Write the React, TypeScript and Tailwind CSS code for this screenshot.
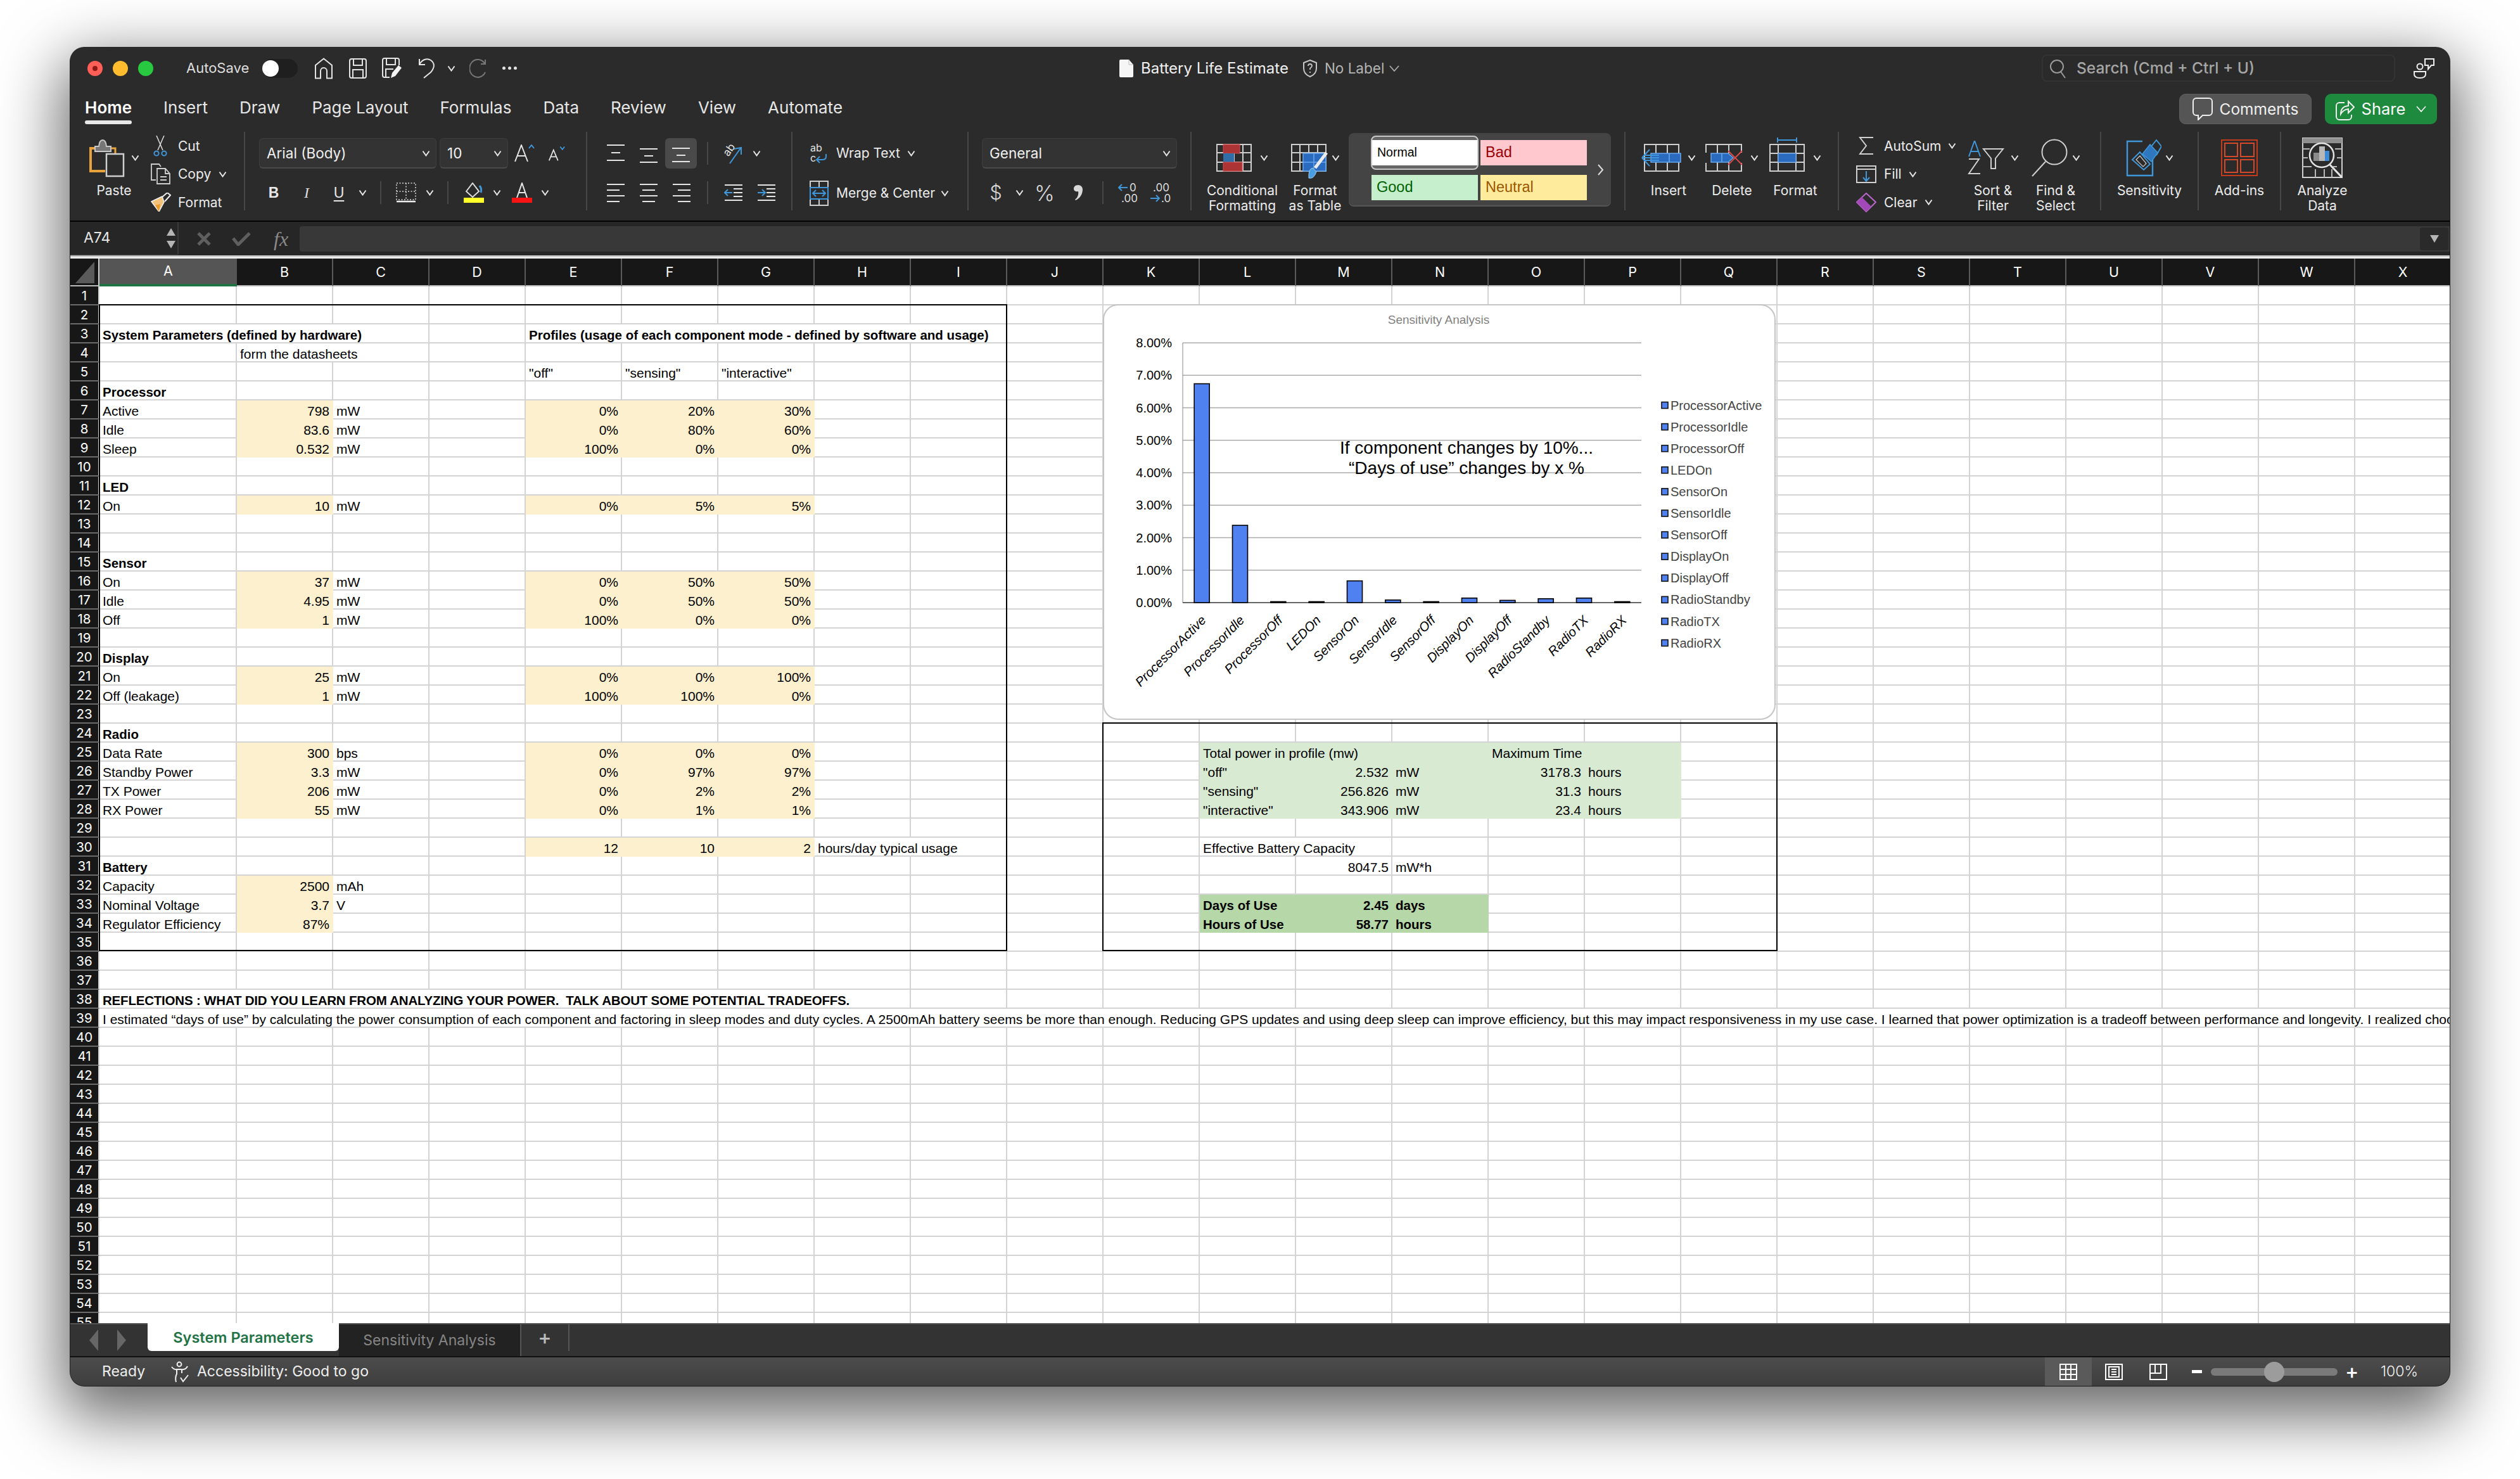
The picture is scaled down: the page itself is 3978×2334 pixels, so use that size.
import React from "react";

type CellDef = { c: number; span?: number; t: string; b?: boolean; r?: boolean; tight?: boolean };

const LET = "ABCDEFGHIJKLMNOPQRSTUVWX".split("");
const L = (t: string, b = false): CellDef => ({ c: 1, t, b });
const V = (c: number, t: string): CellDef => ({ c, t, r: true });
const T = (c: number, t: string, span = 1, b = false): CellDef => ({ c, t, span, b });

const param = (label: string, v: string, u: string, a: string, b: string, c: string): CellDef[] => [
  L(label), V(2, v), T(3, u), V(5, a), V(6, b), V(7, c),
];

const ROWS: Record<number, CellDef[]> = {
  3: [{ c: 1, t: "System Parameters (defined by hardware)", span: 3, b: true }, { c: 5, t: "Profiles (usage of each component mode - defined by software and usage)", span: 5, b: true }],
  4: [T(2, "form the datasheets", 2)],
  5: [T(5, '"off"'), T(6, '"sensing"'), T(7, '"interactive"')],
  6: [L("Processor", true)],
  7: param("Active", "798", "mW", "0%", "20%", "30%"),
  8: param("Idle", "83.6", "mW", "0%", "80%", "60%"),
  9: param("Sleep", "0.532", "mW", "100%", "0%", "0%"),
  11: [L("LED", true)],
  12: param("On", "10", "mW", "0%", "5%", "5%"),
  15: [L("Sensor", true)],
  16: param("On", "37", "mW", "0%", "50%", "50%"),
  17: param("Idle", "4.95", "mW", "0%", "50%", "50%"),
  18: param("Off", "1", "mW", "100%", "0%", "0%"),
  20: [L("Display", true)],
  21: param("On", "25", "mW", "0%", "0%", "100%"),
  22: param("Off (leakage)", "1", "mW", "100%", "100%", "0%"),
  24: [L("Radio", true)],
  25: [...param("Data Rate", "300", "bps", "0%", "0%", "0%"), T(12, "Total power in profile (mw)", 2), T(15, "Maximum Time", 2)],
  26: [...param("Standby Power", "3.3", "mW", "0%", "97%", "97%"), T(12, '"off"'), V(13, "2.532"), T(14, "mW"), V(15, "3178.3"), T(16, "hours")],
  27: [...param("TX Power", "206", "mW", "0%", "2%", "2%"), T(12, '"sensing"'), V(13, "256.826"), T(14, "mW"), V(15, "31.3"), T(16, "hours")],
  28: [...param("RX Power", "55", "mW", "0%", "1%", "1%"), T(12, '"interactive"'), V(13, "343.906"), T(14, "mW"), V(15, "23.4"), T(16, "hours")],
  30: [V(5, "12"), V(6, "10"), V(7, "2"), T(8, "hours/day typical usage", 2), T(12, "Effective Battery Capacity", 2)],
  31: [L("Battery", true), V(13, "8047.5"), T(14, "mW*h")],
  32: [L("Capacity"), V(2, "2500"), T(3, "mAh")],
  33: [L("Nominal Voltage"), V(2, "3.7"), T(3, "V"), T(12, "Days of Use", 1, true), { c: 13, t: "2.45", r: true, b: true }, T(14, "days", 1, true)],
  34: [L("Regulator Efficiency"), V(2, "87%"), T(12, "Hours of Use", 1, true), { c: 13, t: "58.77", r: true, b: true }, T(14, "hours", 1, true)],
  38: [{ c: 1, t: "REFLECTIONS : WHAT DID YOU LEARN FROM ANALYZING YOUR POWER.  TALK ABOUT SOME POTENTIAL TRADEOFFS.", span: 8, b: true, tight: true }],
  39: [{ c: 1, t: "I estimated \u201Cdays of use\u201D by calculating the power consumption of each component and factoring in sleep modes and duty cycles. A 2500mAh battery seems be more than enough. Reducing GPS updates and using deep sleep can improve efficiency, but this may impact responsiveness in my use case. I learned that power optimization is a tradeoff between performance and longevity. I realized choosing", span: 24 }],
};

const YELLOW_ROWS = [7, 8, 9, 12, 16, 17, 18, 21, 22, 25, 26, 27, 28];
function fillOf(r: number, c: number): string {
  if (c === 2 && (YELLOW_ROWS.includes(r) || [32, 33, 34].includes(r))) return "yellow";
  if (c >= 5 && c <= 7 && (YELLOW_ROWS.includes(r) || r === 30)) return "yellow";
  if (c >= 12 && c <= 16 && r >= 25 && r <= 28) return "green";
  if (c >= 12 && c <= 14 && r >= 33 && r <= 34) return "dark";
  return "none";
}
const FILL: Record<string, string> = {
  yellow: "bg-[#fdf0cf] border-[#fdf0cf]",
  green: "bg-[#d9ead3] border-[#d9ead3]",
  dark: "bg-[#b6d7a8] border-[#b6d7a8]",
  none: "bg-white border-[#d4d4d4]",
};
const SPAN: Record<number, string> = { 1: "col-span-1", 2: "col-span-2", 3: "col-span-3", 5: "col-span-5", 8: "col-span-8", 24: "col-span-[24]" };

function SheetRow({ r }: { r: number }) {
  const defs = ROWS[r] || [];
  const out: React.ReactNode[] = [];
  for (let c = 1; c <= 24; c++) {
    const d = defs.find((x) => x.c === c);
    const span = d?.span ?? 1;
    out.push(
      <div
        key={c}
        className={`${SPAN[span]} ${FILL[fillOf(r, c)]} ${d?.r ? "justify-end" : "justify-start"} ${d?.b ? "font-bold text-[20.5px]" : "font-normal"} ${d?.tight ? "tracking-[-0.2px]" : ""} box-border h-[30px] border-r-2 border-b-2 flex items-end pl-[5px] pr-[4px] pb-[1px] leading-[21px] whitespace-pre text-black`}
      >
        {d?.t}
      </div>
    );
    c += span - 1;
  }
  return <>{out}</>;
}

const Chev = ({ className = "" }: { className?: string }) => (
  <svg width="13" height="10" viewBox="0 0 13 10" fill="none" className={`shrink-0 ${className}`}>
    <path d="M1.5 1.5 L6.5 8.5 L11.5 1.5" stroke="#e6e6e6" strokeWidth="2" />
  </svg>
);

const W = "#e4e4e4";
const G = "#cfcfcf";
const B = "#3f97d9";

const IconHome = () => (
  <svg width="30" height="34" viewBox="0 0 30 34" fill="none"><path d="M2 32.5 V12 L15 1.5 L28 12 V32.5 H20 V21 a5 5 0 0 0 -10 0 V32.5 Z" stroke={W} strokeWidth="2" /></svg>
);
const IconSave = () => (
  <svg width="28" height="32" viewBox="0 0 28 32" fill="none"><rect x="1" y="1" width="26" height="30" rx="3" stroke={W} strokeWidth="2" /><path d="M7 1 V11 H21 V1 M6 31 V18 H22 V31" stroke={W} strokeWidth="2" /></svg>
);
const IconSaveEdit = () => (
  <svg width="32" height="34" viewBox="0 0 32 34" fill="none"><path d="M12 31 H4 a3 3 0 0 1 -3 -3 V4 a3 3 0 0 1 3 -3 H24 a3 3 0 0 1 3 3 V12" stroke={W} strokeWidth="2" /><path d="M7 1 V11 H21 V1 M6 31 V18 H18" stroke={W} strokeWidth="2" /><path d="M14 32 L16 24 L26 12 L31 16 L21 29 Z" fill="#f2f2f2" /></svg>
);
const IconUndo = () => (
  <svg width="27" height="32" viewBox="0 0 27 32" fill="none"><path d="M2 1 V10 H11 M2 10 C6 2 14 -1 20 3 C27 8 26 15 20 22 L9 31" stroke={W} strokeWidth="2" /></svg>
);
const IconRedo = () => (
  <svg width="28" height="30" viewBox="0 0 28 30" fill="none"><path d="M24 7 A13 14 0 1 0 25 21" stroke="#777" strokeWidth="2" /><path d="M25 1 V8 H18" stroke="#777" strokeWidth="2" /></svg>
);
const IconPaste = () => (
  <svg width="56" height="62" viewBox="0 0 56 62" fill="none">
    <path d="M12 16 H2 V52 H25" stroke="#e8a23b" strokeWidth="4" />
    <path d="M33 16 H41 V27" stroke="#e8a23b" strokeWidth="3" />
    <path d="M9 21 V13 H15 Q16 3 21 3 Q26 3 27 13 H34 V21 Z" fill="#777" stroke="#c8c8c8" strokeWidth="2" />
    <rect x="27" y="25" width="27" height="35" fill="#2b2b2b" stroke="#cfcfcf" strokeWidth="2.5" />
  </svg>
);
const IconCut = () => (
  <svg width="22" height="33" viewBox="0 0 22 33" fill="none">
    <path d="M5 0 L15 23 M17 0 L7 23" stroke="#d6d6d6" strokeWidth="1.6" />
    <circle cx="5" cy="28" r="3.6" stroke={B} strokeWidth="2" /><circle cx="17" cy="28" r="3.6" stroke={B} strokeWidth="2" />
  </svg>
);
const IconCopy = () => (
  <svg width="33" height="33" viewBox="0 0 33 33" fill="none">
    <path d="M9 26 H2 V1 H14 L17 5" stroke={G} strokeWidth="1.8" />
    <path d="M11 8 H24 L31 16 V32 H11 Z M24 8 V16 H31 M16 21 H26 M16 26 H26" stroke={G} strokeWidth="1.8" />
  </svg>
);
const IconBrush = () => (
  <svg width="33" height="30" viewBox="0 0 33 30" fill="none">
    <path d="M2 14 L19 6 L22 15 L14 30 Z" fill="#f3c27a" stroke="#eee" strokeWidth="1.6" />
    <path d="M8 20 L16 18 L14 30 Z" fill="#e99a2c" />
    <path d="M19 7 L27 0 L32 4 L23 14" stroke="#eee" strokeWidth="2" />
  </svg>
);
const IconGrow = ({ up }: { up: boolean }) => (
  <svg width={up ? 32 : 28} height="28" viewBox="0 0 32 28" fill="none">
    <path d={up ? "M1 27 L11 1 L21 27 M5 18 H17" : "M2 27 L10 8 L18 27 M5 20 H15"} stroke={W} strokeWidth="2" />
    <path d={up ? "M23 6 L27 1 L31 6" : "M22 2 L26 7 L30 2"} stroke={B} strokeWidth="2" />
  </svg>
);
const IconAlign = ({ rows }: { rows: [number, number, number][] }) => (
  <svg width="30" height="30" viewBox="0 0 30 30" fill="none">
    {rows.map((r, i) => (
      <rect key={i} x={r[0]} y={r[1]} width={r[2]} height="2" fill={W} />
    ))}
  </svg>
);
const IconOrient = () => (
  <svg width="32" height="34" viewBox="0 0 32 34" fill="none" className="overflow-visible">
    <text x="2" y="18" fontSize="17" fill={W} transform="rotate(-55 10 14)" fontFamily="Inter">ab</text>
    <path d="M11 33 L28 9 M18 10 L29 8 L29 19" stroke={B} strokeWidth="2" />
  </svg>
);
const IconIndent = ({ out }: { out: boolean }) => (
  <svg width="30" height="28" viewBox="0 0 30 28" fill="none">
    <path d="M1 2 H29 M15 14 H29 M1 26 H29 M15 8 H29 M15 20 H29" stroke={W} strokeWidth="2" />
    <path d={out ? "M13 14 H2 M6 9 L1 14 L6 19" : "M1 14 H12 M8 9 L13 14 L8 19"} stroke={B} strokeWidth="2" />
  </svg>
);
const IconWrap = () => (
  <svg width="30" height="34" viewBox="0 0 30 34" fill="none" className="overflow-visible">
    <text x="1" y="14" fontSize="16" fill={W} fontFamily="Inter">ab</text>
    <text x="1" y="30" fontSize="16" fill={W} fontFamily="Inter">c</text>
    <path d="M26 18 V22 Q26 27 20 27 H11 M16 22 L11 27 L16 32" stroke={B} strokeWidth="2" />
  </svg>
);
const IconMerge = () => (
  <svg width="30" height="40" viewBox="0 0 30 40" fill="none">
    <path d="M1 1 H29 V39 H1 Z M1 11 H29 M1 29 H29 M15 1 V11 M15 29 V39" stroke={G} strokeWidth="2" />
    <path d="M1 11 H29 V29 H1 Z" stroke={B} strokeWidth="2" />
    <path d="M6 20 H24 M10 15 L5 20 L10 25 M20 15 L25 20 L20 25" stroke={B} strokeWidth="2" />
  </svg>
);
const GridBase = ({ children, w = 56, h = 44, cols = [14, 28, 42], rows = [14, 29] }: { children?: React.ReactNode; w?: number; h?: number; cols?: number[]; rows?: number[] }) => (
  <svg width={w} height={h} viewBox={`0 0 ${w} ${h}`} fill="none" className="overflow-visible">
    <rect x="1" y="1" width={w - 2} height={h - 2} stroke={G} strokeWidth="2" />
    {cols.map((c) => <path key={c} d={`M${c} 1 V${h - 1}`} stroke={G} strokeWidth="2" />)}
    {rows.map((c) => <path key={c} d={`M1 ${c} H${w - 1}`} stroke={G} strokeWidth="2" />)}
    {children}
  </svg>
);
const IconCond = () => (
  <GridBase>
    <rect x="11" y="1" width="26" height="14" fill="#ac3434" stroke="#d24d4d" strokeWidth="1" />
    <rect x="11" y="15" width="17" height="14" fill="#2f6ea6" />
    <rect x="11" y="29" width="30" height="14" fill="#ac3434" stroke="#d24d4d" strokeWidth="1" />
  </GridBase>
);
const IconTable = () => (
  <GridBase>
    <rect x="19" y="15" width="36" height="28" fill="#2a6bc0" stroke="#6aa8ea" strokeWidth="1.5" />
    <path d="M36 15 V43 M19 29 H55" stroke="#6aa8ea" strokeWidth="1.5" />
    <path d="M56 14 L38 38" stroke="#ececec" strokeWidth="5" />
    <path d="M28 54 Q36 56 40 44 L34 38 Q27 40 28 54 Z" fill="#4a9de0" stroke="#9bcbf0" strokeWidth="1" />
  </GridBase>
);
const IconInsert = () => (
  <svg width="64" height="44" viewBox="0 0 64 44" fill="none" className="overflow-visible">
    <path d="M5 1 H59 V43 H5 Z M23 1 V43 M41 1 V43" stroke={G} strokeWidth="2" />
    <rect x="15" y="15" width="47" height="14" fill="#2a6bc0" stroke="#6aa8ea" strokeWidth="1.5" /><path d="M44 15 V29" stroke="#6aa8ea" strokeWidth="1.5" />
    <path d="M1 22 H28 M1 22 L13 9 M1 22 L13 35 M4 18 H28 M4 26 H28" stroke={B} strokeWidth="2" />
  </svg>
);
const IconDelete = () => (
  <svg width="62" height="44" viewBox="0 0 62 44" fill="none" className="overflow-visible">
    <path d="M1 14 V1 H57 V14 M1 30 V43 H57 V30 M19 1 V15 M37 1 V15 M19 29 V43 M37 29 V43" stroke={G} strokeWidth="2" />
    <path d="M9 15 H36 L44 22 L36 29 H9 Z" fill="#2a6bc0" stroke="#6aa8ea" strokeWidth="1.5" /><path d="M26 15 V29" stroke="#6aa8ea" strokeWidth="1.5" />
    <path d="M36 11 L58 33 M58 11 L36 33" stroke="#d94a4a" strokeWidth="2" />
  </svg>
);
const IconFormat = () => (
  <div className="flex flex-col items-center gap-[2px] -mt-[10px]">
    <svg width="32" height="8" viewBox="0 0 32 8" fill="none"><path d="M1 0 V8 M31 0 V8 M1 4 H31" stroke={B} strokeWidth="2" /></svg>
    <GridBase cols={[14, 42]} rows={[15, 29]}>
      <rect x="14" y="15" width="28" height="14" fill="#2a6bc0" stroke="#6aa8ea" strokeWidth="1" />
    </GridBase>
  </div>
);
const IconSigma = () => (
  <svg width="24" height="28" viewBox="0 0 24 28" fill="none"><path d="M23 1 H2 L12 14 L2 27 H23" stroke={G} strokeWidth="2" /></svg>
);
const IconFill = () => (
  <svg width="32" height="28" viewBox="0 0 32 28" fill="none"><rect x="1" y="1" width="30" height="26" stroke={G} strokeWidth="2" /><path d="M1 6 H31" stroke={G} strokeWidth="2" /><path d="M16 9 V24 M11 19 L16 25 L21 19" stroke={B} strokeWidth="2" /></svg>
);
const IconClear = () => (
  <svg width="32" height="31" viewBox="0 0 32 31" fill="none"><path d="M16 1 L31 15 L16 30 L1 15 Z" stroke="#b868c8" strokeWidth="2" /><path d="M1 15 L9 7 L24 22 L16 30 Z" fill="#a248b8" /></svg>
);
const IconSort = () => (
  <svg width="62" height="54" viewBox="0 0 62 54" fill="none">
    <path d="M2 25 L11 0 L20 25 M5 17 H17" stroke={B} strokeWidth="2" />
    <path d="M2 29 H18 L2 52 H20" stroke={G} strokeWidth="2" />
    <path d="M25 13 H56 L44 28 V44 H37 V28 Z" stroke={G} strokeWidth="2" />
  </svg>
);
const IconFind = () => (
  <svg width="58" height="60" viewBox="0 0 58 60" fill="none"><circle cx="37" cy="21" r="19.5" stroke={G} strokeWidth="2" /><path d="M23 36 L2 59" stroke={G} strokeWidth="2" /></svg>
);
const IconSensitivity = () => (
  <svg width="56" height="60" viewBox="0 0 56 60" fill="none">
    <path d="M26 4 H2 V58 H42 V32" stroke={B} strokeWidth="2.4" />
    <path d="M36 17 L48 2 L56 12 L48 26" stroke={B} strokeWidth="2" />
    <path d="M26 24 L38 9 L50 22 L40 36 Z" fill="#2f78c0" stroke={B} strokeWidth="1.5" />
    <path d="M10 33 L22 21 L38 40 L28 49 Z" stroke={B} strokeWidth="2" />
    <path d="M16 33 L22 27 L32 39 L27 44 Z" stroke={G} strokeWidth="1.2" />
  </svg>
);
const IconAddins = () => (
  <svg width="58" height="58" viewBox="0 0 58 58" fill="none">
    <rect x="1" y="1" width="56" height="56" stroke="#c23b1d" strokeWidth="2" />
    <rect x="6" y="6" width="20" height="21" stroke="#d5482a" strokeWidth="2" /><rect x="31" y="6" width="21" height="21" stroke="#d5482a" strokeWidth="2" />
    <rect x="6" y="32" width="20" height="20" stroke="#d5482a" strokeWidth="2" /><rect x="31" y="32" width="21" height="20" stroke="#d5482a" strokeWidth="2" />
  </svg>
);
const IconAnalyze = () => (
  <svg width="64" height="64" viewBox="0 0 64 64" fill="none">
    <rect x="1" y="1" width="62" height="62" stroke={G} strokeWidth="2" />
    <rect x="1" y="1" width="62" height="8" fill="#8f8f8f" />
    <path d="M1 18 H12 M52 18 H63 M1 32 H9 M55 32 H63 M1 46 H15 M49 46 H55 M21 50 V63 M35 50 V63 M47 50 V63" stroke="#b8b8b8" strokeWidth="2" />
    <circle cx="31" cy="28" r="19" stroke="#e4e4e4" strokeWidth="2.5" fill="#2b2b2b" />
    <rect x="18" y="24" width="9" height="13" fill="#8a8a8a" /><rect x="27" y="14" width="9" height="23" fill="#b8b8b8" /><rect x="36" y="21" width="7" height="16" fill="#3a8ad8" />
    <path d="M44 43 L63 63" stroke="#e4e4e4" strokeWidth="3" />
  </svg>
);
const Sep = () => <div className="w-[2px] h-[36px] bg-[#474747]" />;
const Select = ({ w, label, className = "" }: { w: string; label: string; className?: string }) => (
  <div className={`${w} ${className} h-[48px] box-border bg-[#333333] border border-[#3e3e3e] border-b-2 border-b-[#4a4a4a] rounded-[6px] flex items-center justify-between pl-[11px] pr-[9px] text-[22.5px] text-[#f0f0f0]`}>
    <span>{label}</span>
    <Chev />
  </div>
);
const Big = ({ w, icon, chev = false, label, chevGap = "gap-[13px]" }: { w: string; icon: React.ReactNode; chev?: boolean; label: string; chevGap?: string }) => (
  <div className={`${w} shrink-0 flex flex-col items-center`}>
    <div className={`h-[81px] shrink-0 flex items-center ${chevGap}`}>
      {icon}
      {chev && <Chev />}
    </div>
    <div className="text-center leading-[24px] text-[21px] text-[#ececec] whitespace-pre">{label}</div>
  </div>
);
const Mini = ({ icon, label, chev = true, labelGap = "ml-[10px]", gapChev = "ml-[11px]" }: { icon: React.ReactNode; label: string; chev?: boolean; labelGap?: string; gapChev?: string }) => (
  <div className="h-[44.5px] shrink-0 flex items-center">
    <div className="w-[36px] flex justify-center">{icon}</div>
    <span className={`${labelGap} text-[21px] text-[#ececec]`}>{label}</span>
    {chev && <Chev className={gapChev} />}
  </div>
);
const Group = ({ w, children, className = "" }: { w: string; children: React.ReactNode; className?: string }) => (
  <div className={`${w} ${className} h-[124px] shrink-0 box-border border-r-2 border-[#474747] flex`}>{children}</div>
);
const Style = ({ t, cls, text }: { t: string; cls: string; text: string }) => (
  <div className={`${cls} ${text} h-[40px] w-[168px] flex items-center px-[8px] font-['Liberation_Sans',sans-serif]`}>{t}</div>
);

const BARS = [6.74, 2.38, 0.03, 0.03, 0.67, 0.08, 0.03, 0.14, 0.07, 0.12, 0.14, 0.03];
const NAMES = ["ProcessorActive", "ProcessorIdle", "ProcessorOff", "LEDOn", "SensorOn", "SensorIdle", "SensorOff", "DisplayOn", "DisplayOff", "RadioStandby", "RadioTX", "RadioRX"];

function Chart() {
  const x0 = 126, x1 = 850, y0 = 471, unit = 51.25;
  const step = (x1 - x0) / 12;
  return (
    <div className="absolute left-[1630px] top-[28px] w-[1062px] h-[656px] bg-white border-2 border-[#c4c4c4] rounded-[24px] box-border overflow-hidden">
      <svg width="1062" height="656" viewBox="0 0 1062 656" className="font-['Liberation_Sans',sans-serif] block -ml-[2px] -mt-[2px]">
        <text x="530" y="31" textAnchor="middle" fontSize="19" fill="#808080">Sensitivity Analysis</text>
        {Array.from({ length: 9 }, (_, i) => (
          <g key={i}>
            {i > 0 && <line x1={x0} x2={x1} y1={y0 - i * unit} y2={y0 - i * unit} stroke="#ababab" strokeWidth="1.5" />}
            <text x="109" y={y0 - i * unit + 7} textAnchor="end" fontSize="20" fill="#000">{i}.00%</text>
          </g>
        ))}
        <line x1={x0} x2={x0} y1={y0 - 8 * unit} y2={y0} stroke="#888" strokeWidth="1" />
        <line x1={x0} x2={x1} y1={y0} y2={y0} stroke="#333" strokeWidth="1.5" />
        {BARS.map((v, i) => {
          const cx = x0 + step * (i + 0.5);
          const h = v * unit;
          return <rect key={i} x={cx - 12} y={y0 - h} width="24" height={h} fill="#4f81f0" stroke="#000" strokeWidth="1.6" />;
        })}
        {NAMES.map((n, i) => {
          const cx = x0 + step * (i + 0.5);
          return (
            <text key={n} x={cx + 8} y={y0 + 29} textAnchor="end" fontSize="20.5" fontStyle="italic" fill="#000" transform={`rotate(-45 ${cx + 8} ${y0 + 29})`}>{n}</text>
          );
        })}
        <text x="574" y="236" textAnchor="middle" fontSize="28" fill="#000">If component changes by 10%...</text>
        <text x="574" y="268" textAnchor="middle" fontSize="28" fill="#000">{"\u201CDays of use\u201D changes by x %"}</text>
        {NAMES.map((n, i) => {
          const y = 159.5 + i * 34.1;
          return (
            <g key={n}>
              <rect x="882" y={y - 5} width="10" height="10" fill="#4f81f0" stroke="#111" strokeWidth="1.6" />
              <text x="896" y={y + 7} fontSize="20" fill="#444">{n}</text>
            </g>
          );
        })}
      </svg>
    </div>
  );
}

export default function App() {
  const rows = Array.from({ length: 55 }, (_, i) => i + 1);
  return (
    <div className="w-[3978px] h-[2334px] bg-white overflow-hidden pt-[75px] pl-[111px] box-border font-[Inter,sans-serif]">
      <div className="w-[3756px] h-[2112px] rounded-[22px] overflow-hidden flex flex-col bg-[#2b2b2b] shadow-[0_34px_100px_14px_rgba(0,0,0,0.6),0_0_0_1px_rgba(0,0,0,0.8)] relative">
        {/* Title bar */}
        <div className="h-[65px] shrink-0 flex items-center">
          <div className="w-[1655px] shrink-0 flex items-center pl-[27px]">
            <div className="w-[24px] h-[24px] rounded-full bg-[#ff5f57] flex items-center justify-center"><div className="w-[8px] h-[8px] rounded-full bg-[#8a1a14]" /></div>
            <div className="w-[24px] h-[24px] rounded-full bg-[#febc2e] ml-[16px]" />
            <div className="w-[24px] h-[24px] rounded-full bg-[#28c840] ml-[16px]" />
            <span className="ml-[52px] w-[101px] text-[22px] text-[#dedede] whitespace-nowrap">AutoSave</span>
            <div className="ml-[19px] w-[56px] h-[30px] rounded-full bg-[#1f1f1f] flex items-center">
              <div className="w-[26px] h-[26px] rounded-full bg-white" />
            </div>
            <div className="ml-[26px] flex items-center"><IconHome /></div>
            <div className="ml-[25px] flex items-center"><IconSave /></div>
            <div className="ml-[24px] flex items-center"><IconSaveEdit /></div>
            <div className="ml-[25px] flex items-center"><IconUndo /></div>
            <Chev className="ml-[19px]" />
            <div className="ml-[22px] flex items-center"><IconRedo /></div>
            <div className="ml-[24px] flex gap-[4px]">
              <div className="w-[5px] h-[5px] rounded-full bg-[#e4e4e4]" /><div className="w-[5px] h-[5px] rounded-full bg-[#e4e4e4]" /><div className="w-[5px] h-[5px] rounded-full bg-[#e4e4e4]" />
            </div>
          </div>
          <svg width="24" height="30" viewBox="0 0 24 30"><path d="M1 3 a2 2 0 0 1 2 -2 H16 L23 9 V27 a2 2 0 0 1 -2 2 H3 a2 2 0 0 1 -2 -2 Z" fill="#f5f5f5" /><path d="M16 1 V9 H23" stroke="#bbb" fill="none" /></svg>
          <span className="ml-[11px] text-[24px] text-[#f0f0f0]">Battery Life Estimate</span>
          <svg width="22" height="28" viewBox="0 0 22 28" fill="none" className="ml-[23px]"><path d="M11 1 L21 5 V14 Q21 23 11 27 Q1 23 1 14 V5 Z" stroke="#c6c6c6" strokeWidth="2" /><path d="M8 10 Q8 7 11 7 Q14 7 14 10 Q14 12 11 14 V16 M11 19 V21" stroke="#c6c6c6" strokeWidth="1.8" /></svg>
          <span className="ml-[12px] text-[22.5px] text-[#b5b5b5]">No Label</span>
          <svg width="16" height="10" viewBox="0 0 16 10" fill="none" className="ml-[8px]"><path d="M1 1 L8 9 L15 1" stroke="#aaa" strokeWidth="1.8" /></svg>
          <div className="ml-auto w-[558px] h-[43px] box-border rounded-[8px] border-2 border-[#333333] bg-[#2a2a2a] flex items-center pl-[10px]">
            <svg width="26" height="32" viewBox="0 0 26 32" fill="none"><circle cx="12" cy="13" r="10" stroke="#9a9a9a" strokeWidth="2" /><path d="M18 21 L25 31" stroke="#9a9a9a" strokeWidth="2" /></svg>
            <span className="ml-[17px] text-[24.5px] font-medium text-[#a6a6a6]">Search (Cmd + Ctrl + U)</span>
          </div>
          <svg width="34" height="32" viewBox="0 0 34 32" fill="none" className="ml-[29px] mr-[23px]"><circle cx="10" cy="13" r="4.5" stroke="#eee" strokeWidth="2" /><path d="M1 21 H19 V25 Q19 31 10 31 Q1 31 1 25 Z" stroke="#eee" strokeWidth="2" /><path d="M18 1 H32 V11 H28 L23 17 V11 H18 Z" stroke="#eee" strokeWidth="2" /></svg>
        </div>
        {/* Tabs */}
        <div className="h-[68px] shrink-0 flex items-start pl-[23px] pr-[20px] text-[26px] text-[#e6e6e6]">
          <div className="flex gap-[50px] pt-[15px]">
            <div className="flex flex-col items-stretch">
              <span className="font-semibold text-white leading-[30px]">Home</span>
              <div className="h-[6px] rounded-full bg-[#e8e8e8] mt-[5px]" />
            </div>
            {["Insert", "Draw", "Page Layout", "Formulas", "Data", "Review", "View", "Automate"].map((t) => (
              <span key={t} className="leading-[30px]">{t}</span>
            ))}
          </div>
          <div className="ml-auto flex pt-[8px] gap-[21px] h-[56px]">
            <div className="w-[209px] h-[48px] rounded-[10px] bg-[#555555] border border-[#5e5e5e] box-border flex items-center justify-center gap-[11px] text-[#f0f0f0] text-[24.5px]">
              <svg width="32" height="36" viewBox="0 0 32 36" fill="none"><path d="M6 1 H26 a5 5 0 0 1 5 5 V23 a5 5 0 0 1 -5 5 H16 L9 35 V28 H6 a5 5 0 0 1 -5 -5 V6 a5 5 0 0 1 5 -5 Z" stroke="#eee" strokeWidth="2" /></svg>
              Comments
            </div>
            <div className="w-[177px] h-[48px] rounded-[10px] bg-[#1e8a3e] flex items-center justify-center text-white text-[25.5px] gap-[11px]">
              <svg width="30" height="36" viewBox="0 0 30 36" fill="none"><path d="M14 8 H6 a5 5 0 0 0 -5 5 V30 a5 5 0 0 0 5 5 H20 a5 5 0 0 0 5 -5 V27" stroke="#eee" strokeWidth="2" /><path d="M8 26 Q8 14 20 13 V6 L29 15 L20 24 V18 Q12 19 8 26 Z" stroke="#eee" strokeWidth="2" /></svg>
              Share
              <svg width="16" height="10" viewBox="0 0 16 10" fill="none" className="ml-[6px]"><path d="M1 1 L8 9 L15 1" stroke="#fff" strokeWidth="1.6" /></svg>
            </div>
          </div>
        </div>
        {/* Ribbon */}
        <div className="h-[140px] shrink-0 flex items-start">
          <Group w="w-[276px]" className="pl-[14px]">
            <Big w="w-[110px]" icon={<IconPaste />} chev label="Paste" chevGap="gap-[10px]" />
            <div className="flex flex-col">
              <Mini icon={<IconCut />} label="Cut" chev={false} />
              <Mini icon={<IconCopy />} label="Copy" gapChev="ml-[12px]" />
              <Mini icon={<IconBrush />} label="Format" chev={false} />
            </div>
          </Group>
          <Group w="w-[540px]" className="pl-[22px] flex-col">
            <div className="flex items-center mt-[10px] h-[48px]">
              <Select w="w-[280px]" label="Arial (Body)" />
              <Select w="w-[108px]" label="10" className="ml-[5px]" />
              <div className="ml-[9px] w-[34px] flex justify-center"><IconGrow up /></div>
              <div className="ml-[19px] w-[30px] flex justify-center"><IconGrow up={false} /></div>
            </div>
            <div className="flex items-center h-[40px] mt-[18px]">
              <div className="w-[46px] text-center font-['Liberation_Sans',sans-serif] font-bold text-[23px] text-[#e8e8e8]">B</div>
              <div className="w-[52px] ml-[3px] text-center font-['Liberation_Serif',serif] italic text-[24px] text-[#dcdcdc]">I</div>
              <div className="w-[50px] text-center"><span className="font-['Liberation_Sans',sans-serif] text-[23px] text-[#e8e8e8] underline underline-offset-[4px]">U</span></div>
              <div className="w-[24px] flex justify-center"><Chev /></div>
              <div className="w-[34px] flex justify-center"><Sep /></div>
              <div className="w-[46px] flex justify-center">
                <svg width="32" height="32" viewBox="0 0 32 32" fill="none"><path d="M1 1 H31 V27 H1 Z M16 1 V27 M1 14 H31" stroke="#ddd" strokeWidth="1.5" strokeDasharray="2 2.5" /><path d="M1 30 H31" stroke="#eee" strokeWidth="2.5" /></svg>
              </div>
              <div className="w-[28px] flex justify-center"><Chev /></div>
              <div className="w-[30px] flex justify-center"><Sep /></div>
              <div className="w-[52px] flex flex-col items-center">
                <svg width="30" height="24" viewBox="0 0 30 24" fill="none"><path d="M3 14 L13 1 L23 14 L13 23 Z" stroke="#ddd" strokeWidth="2" /><path d="M24 5 Q28 10 26 16" stroke={B} strokeWidth="3" /></svg>
                <div className="w-[32px] h-[8px] bg-[#ffff29]" />
              </div>
              <div className="w-[20px] flex justify-center"><Chev /></div>
              <div className="w-[40px] ml-[10px] flex flex-col items-center">
                <svg width="20" height="24" viewBox="0 0 20 24" fill="none"><path d="M2 24 L10 1 L18 24 M5 16 H15" stroke="#e8e8e8" strokeWidth="2" /></svg>
                <div className="w-[32px] h-[8px] bg-[#f81414]" />
              </div>
              <div className="w-[24px] ml-[4px] flex justify-center"><Chev /></div>
            </div>
          </Group>
          <Group w="w-[324px]" className="pl-[19px] flex-col">
            <div className="flex items-center mt-[10px] h-[48px]">
              <div className="w-[52px] flex justify-center"><IconAlign rows={[[1, 1, 28], [8, 13, 14], [1, 25, 28]]} /></div>
              <div className="w-[52px] flex justify-center"><IconAlign rows={[[1, 7, 28], [8, 18, 14], [1, 28, 28]]} /></div>
              <div className="w-[50px] h-[48px] bg-[#4a4a4a] rounded-[6px] flex justify-center items-center"><IconAlign rows={[[1, 6, 28], [8, 17, 14], [1, 27, 28]]} /></div>
              <div className="w-[30px] ml-[2px] flex justify-center"><Sep /></div>
              <div className="w-[50px] flex justify-center"><IconOrient /></div>
              <div className="w-[24px] flex justify-center"><Chev /></div>
            </div>
            <div className="flex items-center h-[40px] mt-[18px]">
              <div className="w-[52px] flex justify-center"><IconAlign rows={[[1, 1, 28], [1, 10, 20], [1, 19, 28], [1, 28, 20]]} /></div>
              <div className="w-[52px] flex justify-center"><IconAlign rows={[[1, 1, 28], [5, 10, 20], [1, 19, 28], [5, 28, 20]]} /></div>
              <div className="w-[52px] flex justify-center"><IconAlign rows={[[1, 1, 28], [9, 10, 20], [1, 19, 28], [9, 28, 20]]} /></div>
              <div className="w-[30px] flex justify-center"><Sep /></div>
              <div className="w-[52px] flex justify-center"><IconIndent out /></div>
              <div className="w-[52px] flex justify-center"><IconIndent out={false} /></div>
            </div>
          </Group>
          <Group w="w-[278px]" className="pl-[22px] flex-col text-[21px] text-[#ececec]">
            <div className="flex items-center mt-[10px] h-[48px]">
              <div className="w-[40px] flex justify-center"><IconWrap /></div>
              <span className="ml-[7px]">Wrap Text</span>
              <Chev className="ml-[11px]" />
            </div>
            <div className="flex items-center h-[40px] mt-[19px]">
              <div className="w-[40px] flex justify-center"><IconMerge /></div>
              <span className="ml-[7px]">{"Merge & Center"}</span>
              <Chev className="ml-[9px]" />
            </div>
          </Group>
          <Group w="w-[352px]" className="pl-[21px] flex-col">
            <div className="flex items-center mt-[10px] h-[48px]"><Select w="w-[308px]" label="General" /></div>
            <div className="flex items-center h-[40px] mt-[18px] text-[#d8d8d8]">
              <div className="w-[44px] text-center text-[31px] font-light">$</div>
              <div className="w-[30px] flex justify-center"><Chev /></div>
              <div className="w-[50px] text-center text-[34px] font-light">%</div>
              <div className="w-[56px] flex justify-center">
                <svg width="16" height="26" viewBox="0 0 16 26"><path d="M8 1 C3 1 1 4 1 7 C1 10 4 12 8 11 C9 16 7 21 3 24 L4 25 C11 22 15 15 15 8 C15 4 12 1 8 1 Z" fill="#d8d8d8" /></svg>
              </div>
              <div className="w-[22px] flex justify-center"><Sep /></div>
              <div className="w-[60px] flex justify-center">
                <svg width="34" height="32" viewBox="0 0 34 32" fill="none" className="overflow-visible"><path d="M15 8 H1 M6 3 L1 8 L6 13" stroke={B} strokeWidth="2" /><text x="18" y="14" fontSize="17" fill="#ddd" fontFamily="Inter">0</text><text x="5" y="31" fontSize="17" fill="#ddd" fontFamily="Inter">.00</text></svg>
              </div>
              <div className="w-[40px] flex justify-center">
                <svg width="34" height="32" viewBox="0 0 34 32" fill="none" className="overflow-visible"><text x="5" y="14" fontSize="17" fill="#ddd" fontFamily="Inter">.00</text><path d="M1 25 H15 M10 20 L15 25 L10 30" stroke={B} strokeWidth="2" /><text x="18" y="31" fontSize="17" fill="#ddd" fontFamily="Inter">.0</text></svg>
              </div>
            </div>
          </Group>
          <Group w="w-[685px]" className="pl-[5px]">
            <Big w="w-[150px]" icon={<IconCond />} chev label={"Conditional\nFormatting"} />
            <Big w="w-[80px]" icon={<IconTable />} chev label={"Format\nas Table"} chevGap="gap-[8px]" />
            <div className="ml-[13px] mt-[2px] w-[414px] h-[116px] box-border bg-[#444444] border-b-2 border-[#555555] rounded-[8px] pt-[4px] pl-[36px] flex flex-col relative">
              <div className="flex items-center h-[54px]">
                <div className="w-[170px] h-[54px] box-border rounded-[8px] border-2 border-[#c8c8c8] bg-[#666666] flex items-center -ml-[1px]">
                  <Style t="Normal" cls="bg-white w-[166px]" text="text-black text-[19.5px]" />
                </div>
                <div className="ml-[3px]"><Style t="Bad" cls="bg-[#ffc7ce]" text="text-[#9c0006] text-[23.5px]" /></div>
              </div>
              <div className="flex items-center mt-[8px] gap-[4px]">
                <Style t="Good" cls="bg-[#c6efce]" text="text-[#006100] text-[23.5px]" />
                <Style t="Neutral" cls="bg-[#ffeb9c]" text="text-[#9c5700] text-[23.5px]" />
              </div>
              <svg width="10" height="18" viewBox="0 0 10 18" fill="none" className="absolute right-[11px] top-[49px]"><path d="M1 1 L8 9 L1 17" stroke="#ddd" strokeWidth="2" /></svg>
            </div>
          </Group>
          <Group w="w-[337px]" className="pl-[18px]">
            <Big w="w-[100px]" icon={<IconInsert />} chev label="Insert" chevGap="gap-[9px]" />
            <Big w="w-[100px]" icon={<IconDelete />} chev label="Delete" chevGap="gap-[9px]" />
            <Big w="w-[100px]" icon={<IconFormat />} chev label="Format" chevGap="gap-[13px]" />
          </Group>
          <Group w="w-[414px]" className="pl-[25px]">
            <div className="flex flex-col w-[168px]">
              <Mini icon={<IconSigma />} label="AutoSum" />
              <Mini icon={<IconFill />} label="Fill" />
              <Mini icon={<IconClear />} label="Clear" />
            </div>
            <Big w="w-[100px]" icon={<IconSort />} chev label={"Sort &\nFilter"} chevGap="gap-[6px]" />
            <Big w="w-[98px]" icon={<IconFind />} chev label={"Find &\nSelect"} chevGap="gap-[7px]" />
          </Group>
          <Group w="w-[154px]"><Big w="w-[152px]" icon={<IconSensitivity />} chev label="Sensitivity" chevGap="gap-[6px]" /></Group>
          <Group w="w-[130px]"><Big w="w-[128px]" icon={<IconAddins />} label="Add-ins" /></Group>
          <Big w="w-[130px]" icon={<IconAnalyze />} label={"Analyze\nData"} />
        </div>
        <div className="h-[2px] shrink-0 bg-black" />
        {/* Formula bar */}
        <div className="h-[53px] shrink-0 flex bg-[#262626]">
          <div className="w-[171px] h-[52px] box-border border-r-2 border-b border-[#3a3a3a] bg-[#262626] flex items-center pl-[21px] pr-[3px] justify-between text-[23px] text-[#e6e6e6]">
            A74
            <div className="flex flex-col gap-[8px]">
              <svg width="14" height="12" viewBox="0 0 14 12"><path d="M7 0 L14 12 H0 Z" fill="#b5b5b5" /></svg>
              <svg width="14" height="12" viewBox="0 0 14 12"><path d="M7 12 L14 0 H0 Z" fill="#b5b5b5" /></svg>
            </div>
          </div>
          <div className="w-[191px] flex items-center">
            <svg width="22" height="22" viewBox="0 0 22 22" fill="none" className="ml-[29px] shrink-0"><path d="M2 2 L20 20 M20 2 L2 20" stroke="#5f5f5f" strokeWidth="5" /></svg>
            <svg width="30" height="22" viewBox="0 0 30 22" fill="none" className="ml-[33px] shrink-0"><path d="M2 10 L10 20 L28 2" stroke="#5f5f5f" strokeWidth="5" /></svg>
            <span className="ml-[36px] font-['Liberation_Serif',serif] italic text-[32px] text-[#8a8a8a]">fx</span>
          </div>
          <div className="flex-1 h-[40px] mt-[7px] bg-[#383838] rounded-l-[4px] flex justify-end pr-[2px] items-center">
            <div className="w-[45px] h-[36px] rounded-[4px] bg-[#2a2a2a] flex items-center justify-center">
              <svg width="14" height="12" viewBox="0 0 14 12"><path d="M7 12 L14 0 H0 Z" fill="#b5b5b5" /></svg>
            </div>
          </div>
        </div>
        <div className="h-[5px] shrink-0 bg-[#d0d0d0] border-b-2 border-[#f4f4f4] box-border" />
        {/* Column header */}
        <div className="h-[44px] shrink-0 grid grid-cols-[46px_217px_repeat(23,152px)] bg-[#171717] text-white text-[21.5px]">
          <div className="border-b-2 border-[#bdbdbd] box-border flex items-end justify-end pb-[3px] pr-[6px] border-r-2 border-r-[#cfcfcf]">
            <svg width="30" height="34" viewBox="0 0 30 34"><path d="M30 0 V34 H0 Z" fill="#5a5a5a" /></svg>
          </div>
          <div className="bg-[#555555] border-b-4 border-[#217346] box-border flex items-center justify-center pb-[2px]">A</div>
          {LET.slice(1).map((l) => (
            <div key={l} className="border-b-2 border-[#bdbdbd] border-r-2 border-r-[#5a5a5a] box-border flex items-center justify-center">{l}</div>
          ))}
        </div>
        {/* Sheet */}
        <div className="h-[1636px] shrink-0 overflow-hidden relative bg-white font-['Liberation_Sans',Arial,sans-serif] text-[21px]">
          <div className="grid grid-cols-[46px_217px_repeat(23,152px)] auto-rows-[30px]">
            {rows.map((r) => (
              <React.Fragment key={r}>
                <div className="h-[30px] box-border bg-[#171717] border-b-2 border-[#6a6a6a] border-r-2 border-r-[#cfcfcf] flex items-center justify-center pt-[2px] text-white text-[20.5px] font-[Inter,sans-serif]">{r}</div>
                <SheetRow r={r} />
              </React.Fragment>
            ))}
          </div>
          <div className="absolute left-[45px] top-[28px] w-[1434px] h-[1021px] border-2 border-black box-border pointer-events-none" />
          <div className="absolute left-[1629px] top-[688px] w-[1066px] h-[361px] border-2 border-black box-border pointer-events-none" />
          <Chart />
        </div>
        {/* Sheet tabs */}
        <div className="h-[52px] shrink-0 bg-[#333333] border-t-2 border-[#555555] box-border flex items-start">
          <div className="w-[122px] h-[50px] flex items-center pl-[30px] gap-[30px]">
            <svg width="14" height="34" viewBox="0 0 14 34"><path d="M14 0 V34 L0 17 Z" fill="#666" /></svg>
            <svg width="14" height="34" viewBox="0 0 14 34"><path d="M0 0 V34 L14 17 Z" fill="#666" /></svg>
          </div>
          <div className="w-[302px] h-[44px] -mt-[2px] pt-[2px] bg-white rounded-b-[6px] flex items-center justify-center text-[#217346] font-semibold text-[23.5px]">System Parameters</div>
          <div className="w-[288px] h-[50px] bg-[#222222] border-r-2 border-[#555555] box-border flex items-center justify-center text-[#858585] text-[23px]">Sensitivity Analysis</div>
          <div className="w-[76px] h-[42px] border-r-2 border-[#555555] box-border flex items-center justify-center text-[#bbb] text-[32px] font-medium">+</div>
        </div>
        {/* Status bar */}
        <div className="h-[47px] shrink-0 bg-gradient-to-b from-[#4c4c4c] to-[#3e3e3e] border-t-2 border-[#111111] box-border flex items-center pl-[50px] text-[23px] text-[#eeeeee]">
          <span className="w-[69px] whitespace-nowrap">Ready</span>
          <svg width="30" height="34" viewBox="0 0 30 34" fill="none" className="ml-[39px]"><circle cx="14" cy="5" r="3.4" stroke="#eee" strokeWidth="2" /><path d="M2 9 Q6 14 10 13 H18 Q24 14 27 8 M10 13 V20 Q7 26 9 33 M18 13 V19 M16 26 L20 32 L28 22" stroke="#eee" strokeWidth="2" /></svg>
          <span className="ml-[12px]">Accessibility: Good to go</span>
          <div className="ml-auto flex items-center pr-[50px] h-[45px]">
            <div className="w-[74px] h-[45px] bg-[#5a5a5a] flex items-center justify-center">
              <svg width="28" height="26" viewBox="0 0 28 26" fill="none"><path d="M1 1 H27 V25 H1 Z M10 1 V25 M18 1 V25 M1 9 H27 M1 17 H27" stroke="#fff" strokeWidth="2" /></svg>
            </div>
            <div className="w-[70px] flex justify-center">
              <svg width="28" height="26" viewBox="0 0 28 26" fill="none"><path d="M1 1 H27 V25 H1 Z M6 5 H22 V21 H6 Z M10 9 H18 M10 13 H18 M10 17 H18" stroke="#fff" strokeWidth="2" /></svg>
            </div>
            <div className="w-[70px] flex justify-center">
              <svg width="28" height="26" viewBox="0 0 28 26" fill="none"><path d="M1 1 H27 V25 H1 Z M1 15 H18 V1 M9 1 V15" stroke="#fff" strokeWidth="2" /></svg>
            </div>
            <div className="w-[16px] h-[5px] bg-white ml-[18px]" />
            <div className="ml-[14px] w-[200px] h-[12px] rounded-full bg-[#7a7a7a] flex items-center pl-[84px]">
              <div className="w-[32px] h-[32px] rounded-full bg-[#9c9c9c] shrink-0" />
            </div>
            <span className="ml-[12px] w-[20px] text-center text-[32px] font-medium text-white leading-[32px]">+</span>
            <span className="ml-[36px] font-light text-[#f0f0f0]">100%</span>
          </div>
        </div>
      </div>
    </div>
  );
}
